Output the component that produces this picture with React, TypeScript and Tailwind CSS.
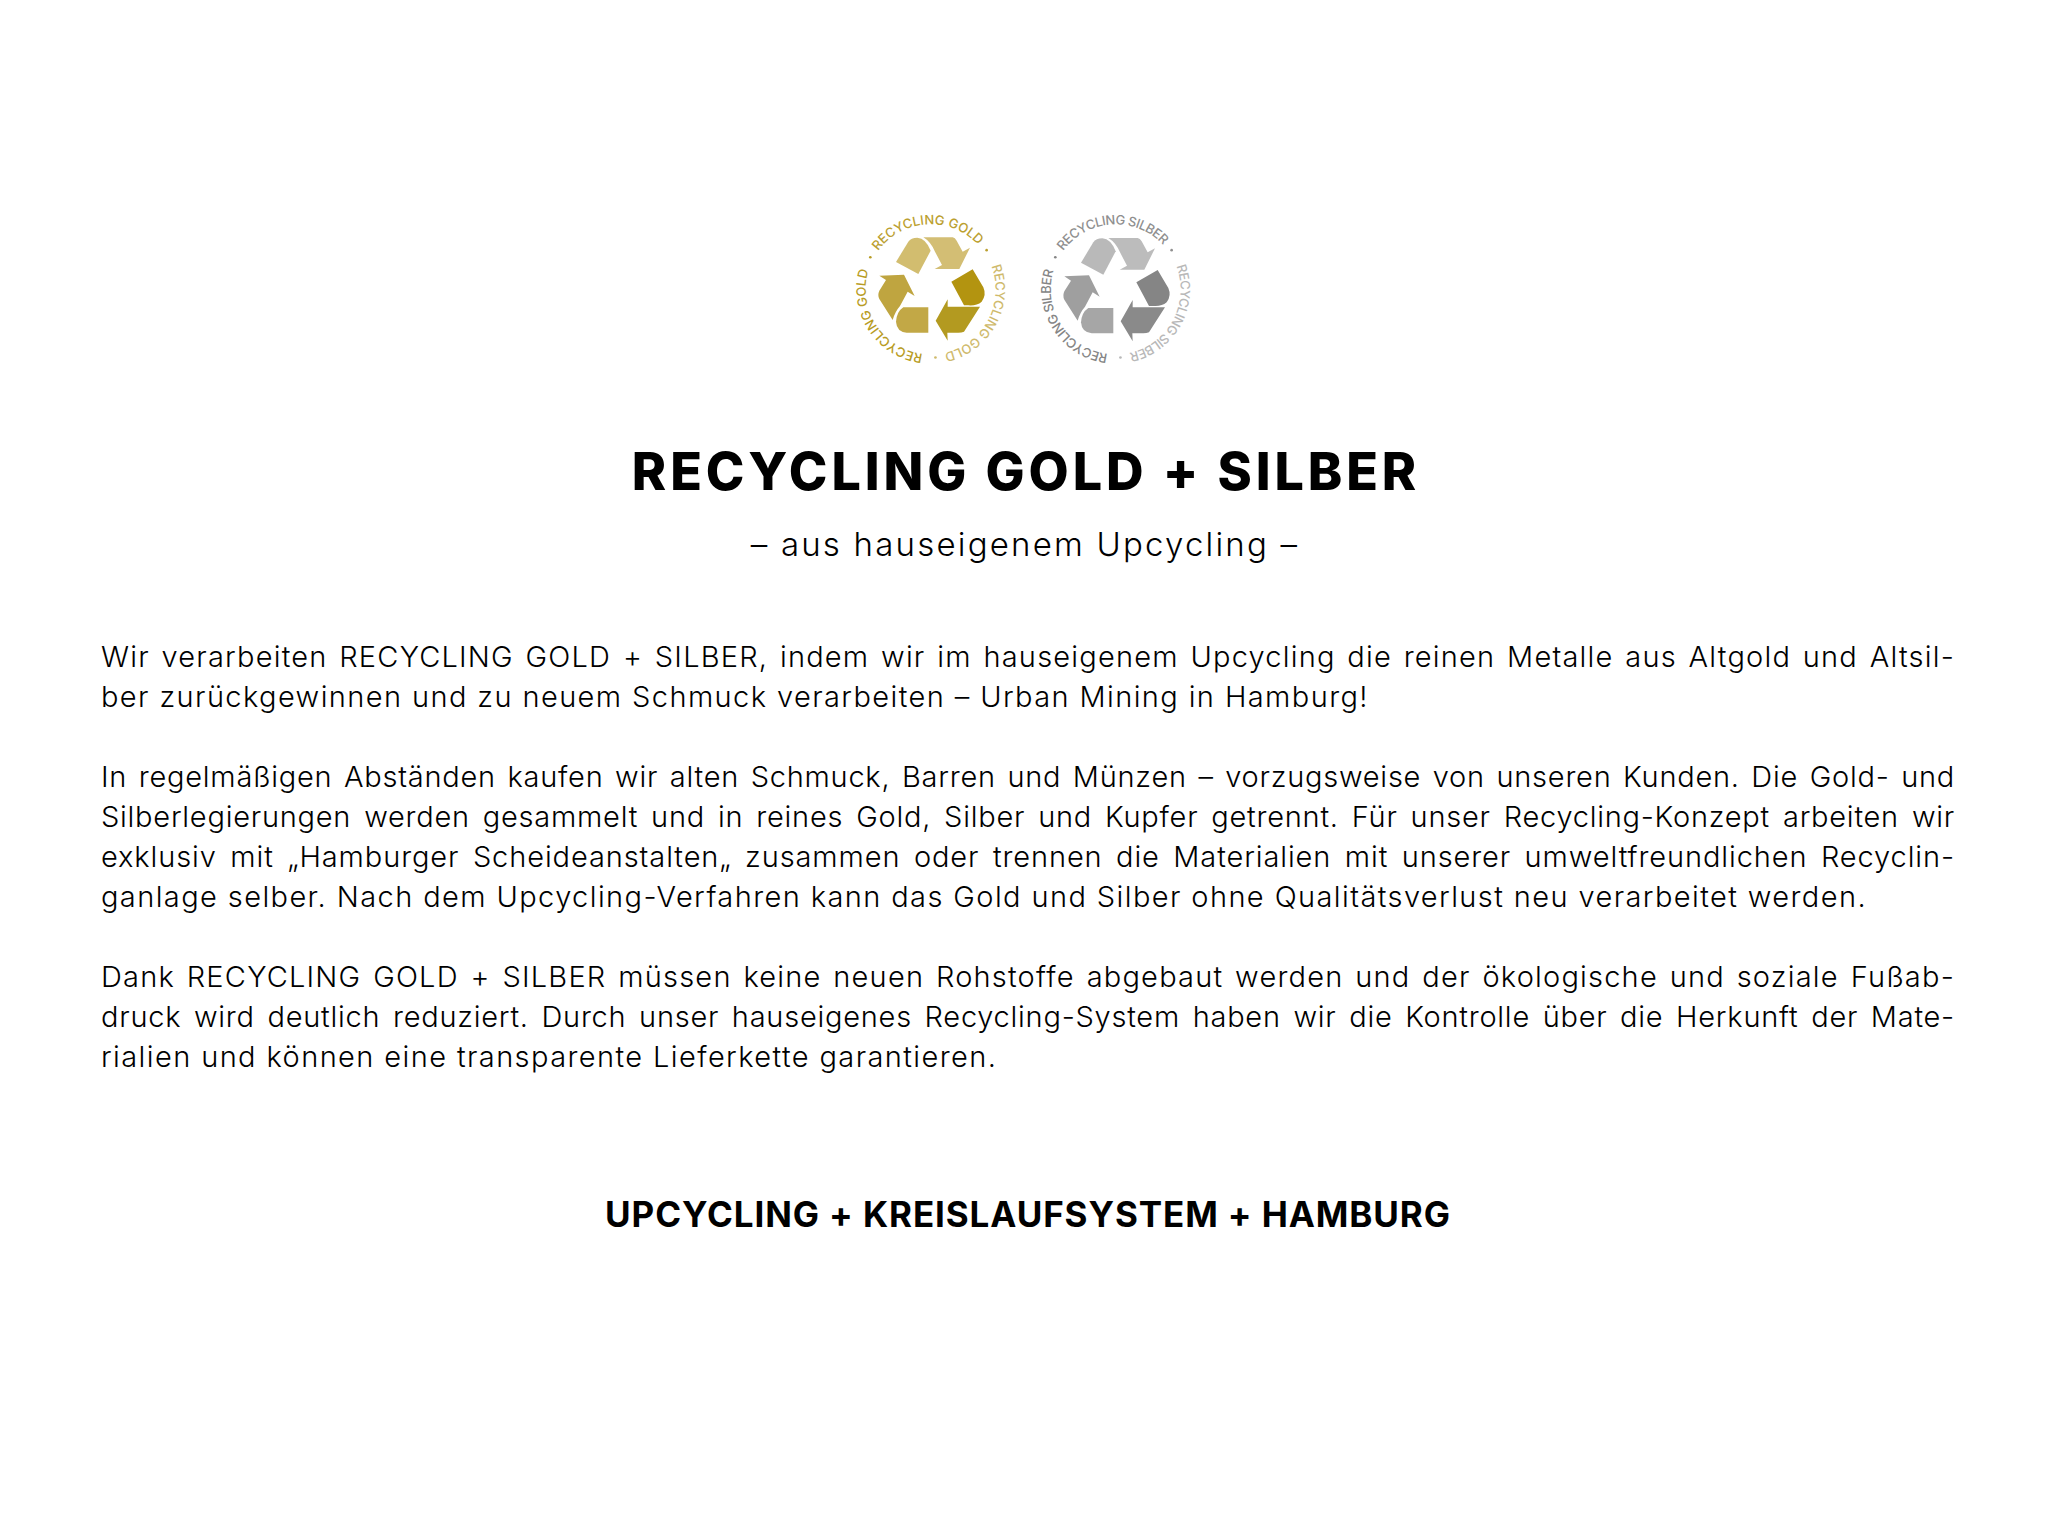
const sans = "font-['Inter','Liberation_Sans',sans-serif]";

type BadgeProps = {
  label: string;
  colors: string[];
  textColors: string[];
  cx: number;
};

// arc on the badge ring, clockwise, angles in degrees from 12 o'clock
function arc(cx: number, cy: number, r: number, from: number, to: number) {
  const pt = (deg: number) => {
    const a = (deg * Math.PI) / 180;
    return `${(cx + r * Math.sin(a)).toFixed(1)} ${(cy - r * Math.cos(a)).toFixed(1)}`;
  };
  return `M${pt(from)} A${r} ${r} 0 0 1 ${pt(to)}`;
}

function Badge({ label, colors, textColors, cx }: BadgeProps) {
  const cy = 268;
  const r = 195;
  const ringX = cx + 2;
  const segments = [
    { from: -54, to: 47 },
    { from: 69, to: 168 },
    { from: 187, to: 287 },
  ];
  const dots = [55, 176, 298];
  const id = label.replace(" ", "-");
  const dx = cx - 270;
  return (
    <svg viewBox="0 0 570 540" className="w-[190px] h-[180px]">
      {segments.map((s, i) => (
        <g key={i}>
          <path id={`${id}-${i}`} d={arc(ringX, cy, r, s.from, s.to + 3)} fill="none" />
          <text fill={textColors[i]} fontSize="39" fontFamily="Inter, sans-serif" fontWeight="500">
            <textPath href={`#${id}-${i}`} textLength={(r * (s.to - s.from) * Math.PI) / 180} lengthAdjust="spacing">
              {label}
            </textPath>
          </text>
        </g>
      ))}
      {dots.map((d, i) => {
        const a = (d * Math.PI) / 180;
        return <circle key={i} cx={ringX + 205 * Math.sin(a)} cy={cy - 205 * Math.cos(a)} r="4" fill={textColors[i]} />;
      })}
      <g transform={`translate(${dx} ${dx === 0 ? 0 : 2})`}>
        <path fill={colors[0]} d="M168 186 L205 125 Q213 113 232 113 Q258 115 272 152 L235 222 Z" />
        <path fill={colors[1]} d="M250 112 L338 112 Q345 113 350 122 L368 155 L390 143 L358 207 L284 207 L306 195 L285 155 Q272 125 250 112 Z" />
        <path fill={colors[2]} d="M398 208 L430 262 Q440 285 425 305 Q410 318 385 316 L372 316 L334 245 Z" />
        <path fill={colors[3]} d="M420 320 L372 395 Q365 398 355 398 L322 398 L323 422 L287 362 L323 298 L323 320 Z" />
        <path fill={colors[4]} d="M158 360 L118 297 Q112 285 118 272 L138 240 L118 227 L192 224 L224 288 L203 275 L180 318 Q165 335 158 360 Z" />
        <path fill={colors[5]} d="M265 322 L265 398 L200 398 Q170 395 168 365 Q170 335 190 322 Z" />
      </g>
    </svg>
  );
}

function Line({ children, className }: { children: string; className?: string }) {
  return <span className={`block whitespace-nowrap ${className ?? ""}`}>{children}</span>;
}

const wide = "text-justify [text-align-last:justify] tracking-[1.2px]";
const mid = "text-justify [text-align-last:justify] tracking-[0.9px]";
const tight = "text-justify [text-align-last:justify] tracking-[0.75px]";

export default function App() {
  return (
    <div className={`${sans} min-h-[1536px] bg-white text-black pt-[200px] pl-[101px] pr-[93px]`}>
      <div className="flex justify-center pl-[4px]">
        <Badge
          label="RECYCLING GOLD"
          cx={270}
          colors={["#d2bd6f", "#d3be74", "#b39410", "#b39a20", "#bfa540", "#c2a846"]}
          textColors={["#bba030", "#cfba6c", "#b89c24"]}
        />
        <Badge
          label="RECYCLING SILBER"
          cx={255}
          colors={["#b9b9b9", "#bcbcbc", "#858585", "#8a8a8a", "#9f9f9f", "#a6a6a6"]}
          textColors={["#8f8f8f", "#b8b8b8", "#858585"]}
        />
      </div>

      <h1 className="mt-[57px] pr-[4px] text-center text-[52px] leading-[70px] font-extrabold tracking-[3.9px]">
        RECYCLING GOLD + SILBER
      </h1>
      <p className="mt-[17px] pr-[6px] text-center text-[33px] leading-[40px] font-light tracking-[2.2px]">
        – aus hauseigenem Upcycling –
      </p>

      <div className="mt-[73px] text-[29px] leading-[40px] font-light tracking-[1.4px] space-y-[40px]">
        <p>
          <Line className={wide}>Wir verarbeiten RECYCLING GOLD + SILBER, indem wir im hauseigenem Upcycling die reinen Metalle aus Altgold und Altsil-</Line>
          <Line>ber zurückgewinnen und zu neuem Schmuck verarbeiten – Urban Mining in Hamburg!</Line>
        </p>
        <p>
          <Line className={tight}>In regelmäßigen Abständen kaufen wir alten Schmuck, Barren und Münzen – vorzugsweise von unseren Kunden. Die Gold- und</Line>
          <Line className={tight}>Silberlegierungen werden gesammelt und in reines Gold, Silber und Kupfer getrennt. Für unser Recycling-Konzept arbeiten wir</Line>
          <Line className={mid}>exklusiv mit „Hamburger Scheideanstalten„ zusammen oder trennen die Materialien mit unserer umweltfreundlichen Recyclin-</Line>
          <Line>ganlage selber. Nach dem Upcycling-Verfahren kann das Gold und Silber ohne Qualitätsverlust neu verarbeitet werden.</Line>
        </p>
        <p>
          <Line className={wide}>Dank RECYCLING GOLD + SILBER müssen keine neuen Rohstoffe abgebaut werden und der ökologische und soziale Fußab-</Line>
          <Line className={tight}>druck wird deutlich reduziert. Durch unser hauseigenes Recycling-System haben wir die Kontrolle über die Herkunft der Mate-</Line>
          <Line>rialien und können eine transparente Lieferkette garantieren.</Line>
        </p>
      </div>

      <h2 className="mt-[115px] text-center text-[35px] leading-[44px] font-bold tracking-[0.9px]">
        UPCYCLING + KREISLAUFSYSTEM + HAMBURG
      </h2>
    </div>
  );
}
